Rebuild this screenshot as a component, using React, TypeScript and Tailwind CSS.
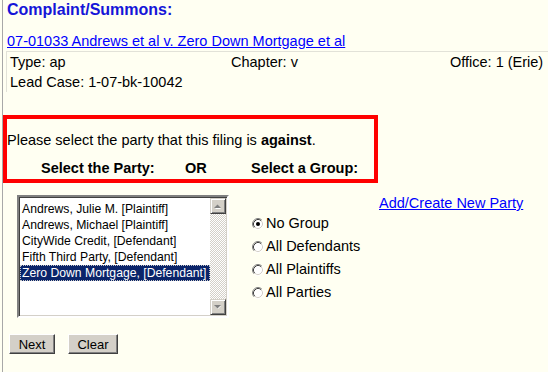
import React from "react";

const parties = [
  "Andrews, Julie M. [Plaintiff]",
  "Andrews, Michael [Plaintiff]",
  "CityWide Credit, [Defendant]",
  "Fifth Third Party, [Defendant]",
  "Zero Down Mortgage, [Defendant]",
];

const groups = ["No Group", "All Defendants", "All Plaintiffs", "All Parties"];

function Radio({ checked }: { checked?: boolean }) {
  return (
    <svg width="12" height="12" viewBox="0 0 12 12" className="shrink-0">
      <circle cx="6" cy="6" r="4.5" fill="#fff" />
      <path d="M2.11 9.89 A5.5 5.5 0 0 1 9.89 2.11" fill="none" stroke="#808080" />
      <path d="M9.89 2.11 A5.5 5.5 0 0 1 2.11 9.89" fill="none" stroke="#fff" />
      <path d="M2.82 9.18 A4.5 4.5 0 0 1 9.18 2.82" fill="none" stroke="#404040" />
      <path d="M9.18 2.82 A4.5 4.5 0 0 1 2.82 9.18" fill="none" stroke="#d4d0c8" />
      {checked && <circle cx="6" cy="6" r="2" fill="#000" />}
    </svg>
  );
}

function ScrollButton({ up }: { up?: boolean }) {
  return (
    <div className="flex h-[16px] w-[16px] items-center justify-center border border-t-[#d4d0c8] border-l-[#d4d0c8] border-r-[#404040] border-b-[#404040] bg-[#d4d0c8] shadow-[inset_1px_1px_#fff,inset_-1px_-1px_#808080]">
      <svg width="8" height="5" viewBox="0 0 8 5">
        {up ? (
          <>
            <path d="M1 5 L4 2 L7 5 Z" fill="#fff" />
            <path d="M0 4 L3.5 0.5 L7 4 Z" fill="#808080" />
          </>
        ) : (
          <>
            <path d="M1 1 L4 4 L7 1 Z" fill="#fff" />
            <path d="M0 0 L3.5 3.5 L7 0 Z" fill="#808080" />
          </>
        )}
      </svg>
    </div>
  );
}

function Button({ label, w }: { label: string; w: string }) {
  return (
    <button
      className={`${w} h-[20px] border border-t-white border-l-white border-r-[#404040] border-b-[#404040] bg-[#d4d0c8] text-[13px] leading-none text-black shadow-[inset_-1px_-1px_#808080]`}
    >
      {label}
    </button>
  );
}

export default function App() {
  return (
    <div className="flex h-[372px] w-[548px] overflow-hidden bg-[#fffff2] font-['Liberation_Sans',Arial,sans-serif] text-[14.5px] text-black">
      <div className="w-[3px] shrink-0 border-r border-[#a8a8a8]" />
      <div className="flex flex-1 flex-col">
        <h1 className="pl-[4px] text-[16px] font-bold leading-[20px] text-[#1515d8]">
          Complaint/Summons:
        </h1>
        <a href="#" className="mt-[13px] pl-[4px] leading-[17px] text-[#0000ff] underline">
          07-01033 Andrews et al v. Zero Down Mortgage et al
        </a>
        <div className="ml-[3px] mt-[1px] grid grid-cols-[224px_219px_1fr] border-l border-t border-[#e2e2d8] leading-[20px]">
          <div className="pl-[3px]">Type: ap</div>
          <div>Chapter: v</div>
          <div>Office: 1 (Erie)</div>
          <div className="col-span-3 pl-[3px]">Lead Case: 1-07-bk-10042</div>
        </div>

        <div className="mt-[23px] h-[68px] w-[375px] border-4 border-[#ff0000]">
          <p className="mt-[11px] leading-[20px]">
            Please select the party that this filing is <b>against</b>.
          </p>
          <div className="mt-[10px] flex pl-[34px] font-bold leading-[16px]">
            <span className="w-[144px]">Select the Party:</span>
            <span className="w-[66px]">OR</span>
            <span>Select a Group:</span>
          </div>
        </div>

        <div className="mt-[12px] flex">
          <div className="ml-[14px] flex h-[123px] w-[212px] border-2 border-t-[#808080] border-l-[#808080] border-r-white border-b-white bg-white shadow-[inset_1px_1px_#404040,inset_-1px_-1px_#d4d0c8]">
            <div className="min-w-0 flex-1 overflow-hidden pl-[1px] pt-[4px] text-[12.2px] leading-[14px]">
              {parties.map((p, i) => (
                <div
                  key={p}
                  className={
                    i === parties.length - 1
                      ? "whitespace-nowrap border border-dotted border-[#c8c8c8] bg-[#0a246a] pl-[1px] text-white"
                      : "whitespace-nowrap border border-transparent pl-[1px]"
                  }
                >
                  {p}
                </div>
              ))}
            </div>
            <div className="my-[1px] mr-[1px] flex w-[16px] shrink-0 flex-col bg-[repeating-conic-gradient(#d4d0c8_0_25%,#ffffff_0_50%)] bg-[length:2px_2px]">
              <ScrollButton up />
              <div className="flex-1" />
              <ScrollButton />
            </div>
          </div>

          <div className="ml-[23px] flex flex-col">
            <a href="#" className="h-[17px] pl-[127px] leading-[16px] text-[#0000ff] underline">
              Add/Create New Party
            </a>
            {groups.map((g, i) => (
              <label key={g} className="flex h-[23px] items-center gap-[2px]">
                <Radio checked={i === 0} />
                <span>{g}</span>
              </label>
            ))}
          </div>
        </div>

        <div className="ml-[6px] mt-[16px] flex gap-[13px]">
          <Button label="Next" w="w-[46px]" />
          <Button label="Clear" w="w-[50px]" />
        </div>
      </div>
    </div>
  );
}
